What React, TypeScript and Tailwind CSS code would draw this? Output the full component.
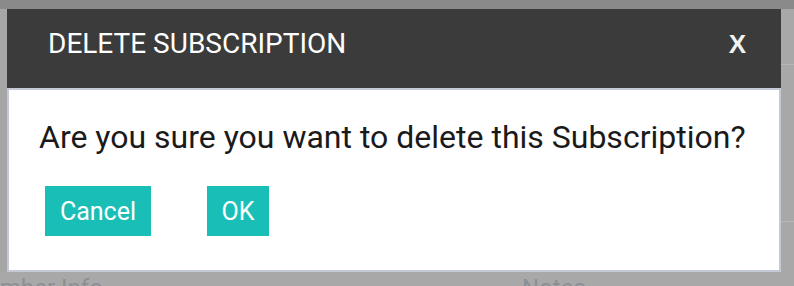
export default function App() {
  return (
    <div
      className="w-[794px] h-[286px] overflow-hidden bg-[#a8a8a8] flex flex-col"
      style={{ fontFamily: 'Roboto, "Liberation Sans", sans-serif' }}
    >
      <div className="h-[9px] shrink-0 bg-[#8a8a8a]" />

      <div className="flex shrink-0">
        <div className="w-[7px] shrink-0 bg-[#a6a6a6]" />

        <div className="w-[774px] shrink-0 flex flex-col">
          <div className="h-[79px] bg-[#3b3b3b] flex items-start justify-between pl-[41px] pr-[35px]">
            <span className="pt-[21px] text-[28px] leading-none text-white">
              DELETE SUBSCRIPTION
            </span>
            <button
              className="mt-[22px] text-[26px] leading-none font-bold text-[#f2f2f2]"
              style={{ fontFamily: '"Liberation Sans", Arial, sans-serif' }}
            >
              X
            </button>
          </div>

          <div className="h-[184px] bg-white border-2 border-[#c3cad6] flex flex-col pl-[30px]">
            <p className="pt-[31px] text-[32px] leading-none text-[#1a1a1a]">
              Are you sure you want to delete this Subscription?
            </p>
            <div className="flex gap-[56px] mt-[33px] ml-[6px]">
              <button className="w-[106px] h-[50px] bg-[#19bfb6] text-white text-[25px] leading-none flex items-center justify-center">
                Cancel
              </button>
              <button className="w-[62px] h-[50px] bg-[#19bfb6] text-white text-[25px] leading-none flex items-center justify-center">
                OK
              </button>
            </div>
          </div>
        </div>

        <div className="flex-1 flex flex-col">
          <div className="h-[56px] border-b border-[#b6b6b6]" />
          <div className="h-[157px] border-b border-[#b6b6b6]" />
        </div>
      </div>

      <div className="flex pt-[4px] text-[24px] leading-none text-[#8b9097]">
        <span className="-ml-[34px] w-[556px] shrink-0">Member Info</span>
        <span>Notes</span>
      </div>
    </div>
  );
}
